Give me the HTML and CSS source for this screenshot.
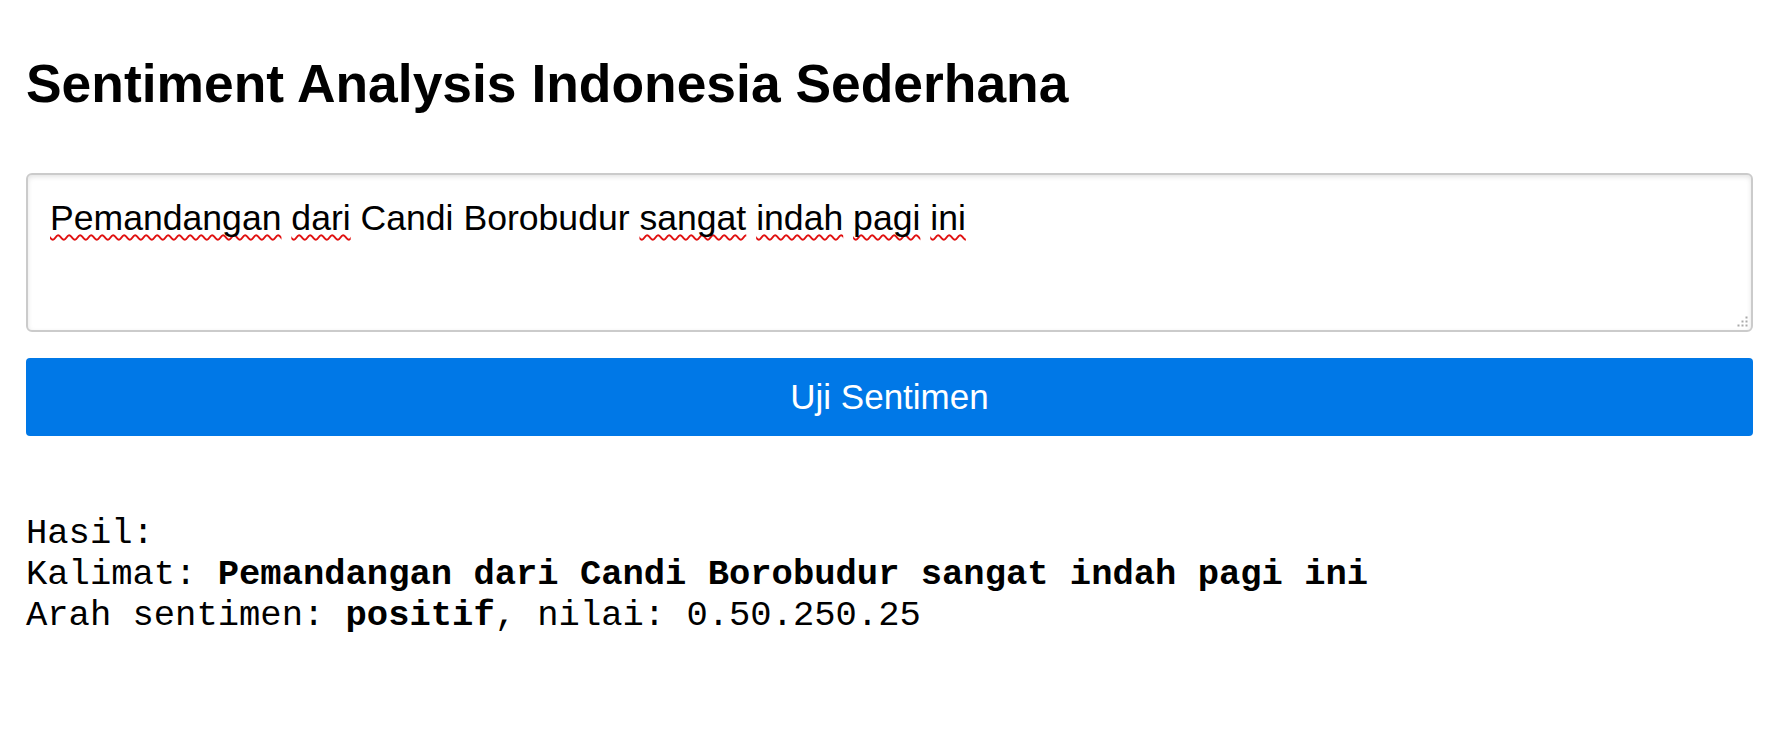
FILE: index.html
```html
<!DOCTYPE html>
<html lang="id">
<head>
<meta charset="utf-8">
<title>Sentiment Analysis Indonesia Sederhana</title>
<link rel="stylesheet" href="styles.css">
</head>
<body>
<main class="page">
  <h1 class="title">Sentiment Analysis Indonesia Sederhana</h1>
  <form class="form">
    <div class="textbox" role="textbox" aria-multiline="true"><span class="typo">Pemandangan</span> <span class="typo">dari</span> Candi Borobudur <span class="typo">sangat</span> <span class="typo">indah</span> <span class="typo">pagi</span> <span class="typo">ini</span><svg class="grip" viewBox="0 0 11 11" width="11" height="11" aria-hidden="true"><rect x="8.5" y="0.5" width="2" height="2"/><rect x="4.5" y="4.5" width="2" height="2"/><rect x="8.5" y="4.5" width="2" height="2"/><rect x="0.5" y="8.5" width="2" height="2"/><rect x="4.5" y="8.5" width="2" height="2"/><rect x="8.5" y="8.5" width="2" height="2"/></svg></div>
    <button type="button" class="submit">Uji Sentimen</button>
  </form>
  <pre class="result">Hasil:
Kalimat: <b>Pemandangan dari Candi Borobudur sangat indah pagi ini</b>
Arah sentimen: <b>positif</b>, nilai: 0.50.250.25</pre>
</main>
</body>
</html>
```

FILE: styles.css
```css
html, body {
  margin: 0;
  padding: 0;
  background: #fff;
}

body {
  font-family: "Liberation Sans", Arial, sans-serif;
  color: #000;
}

.page {
  padding: 53px 34px 0 26px;
}

.title {
  margin: 0 0 59px;
  font-size: 53.4px;
  font-weight: bold;
  line-height: normal;
}

.form {
  display: flex;
  flex-direction: column;
  gap: 26px;
  margin: 0;
}

.textbox {
  position: relative;
  box-sizing: border-box;
  height: 159px;
  padding: 23px 22px;
  border: 2px solid #cbcbcb;
  border-radius: 6px;
  box-shadow: inset 0 2px 5px #e4e4e4;
  font-size: 35.6px;
  line-height: normal;
  color: #000;
  background: #fff;
}

.typo {
  text-decoration-line: underline;
  text-decoration-style: wavy;
  text-decoration-color: #e01010;
  text-decoration-thickness: 2px;
  text-underline-offset: 4px;
  text-decoration-skip-ink: none;
}

.grip {
  position: absolute;
  right: 3px;
  bottom: 3px;
  fill: #a9a9a9;
}

.submit {
  display: block;
  width: 100%;
  margin: 0;
  padding: 19px 0;
  border: 0;
  border-radius: 4px;
  background: #0078e7;
  color: #fff;
  font-family: "Liberation Sans", Arial, sans-serif;
  font-size: 35px;
  line-height: normal;
  text-align: center;
}

.result {
  margin: 77px 0 0;
  font-family: "Liberation Mono", "Courier New", monospace;
  font-size: 35.5px;
  line-height: 41px;
  color: #000;
}

.result b {
  font-weight: bold;
}
```
